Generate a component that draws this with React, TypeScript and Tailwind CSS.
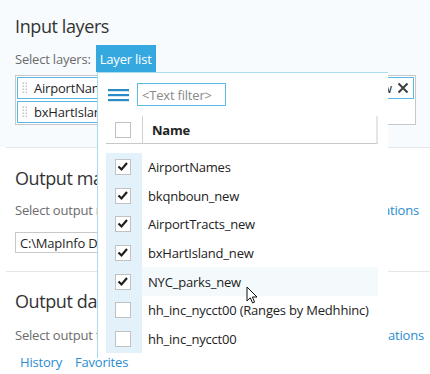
import React from "react";

const layers = [
  { name: "AirportNames", checked: true },
  { name: "bkqnboun_new", checked: true },
  { name: "AirportTracts_new", checked: true },
  { name: "bxHartIsland_new", checked: true },
  { name: "NYC_parks_new", checked: true, hover: true },
  { name: "hh_inc_nycct00 (Ranges by Medhhinc)", checked: false },
  { name: "hh_inc_nycct00", checked: false },
];

function Grip() {
  return (
    <svg width="6" height="12" viewBox="0 0 6 12" className="shrink-0">
      {[1, 4, 7, 10].map((y) => (
        <g key={y} fill="#c4c4c4">
          <rect x="0.5" y={y - 0.5} width="1.5" height="1.5" />
          <rect x="3.5" y={y - 0.5} width="1.5" height="1.5" />
        </g>
      ))}
    </svg>
  );
}

function Checkbox({ checked }: { checked: boolean }) {
  return (
    <div className="w-[16px] h-[16px] border border-[#c2c2c2] bg-white flex items-center justify-center">
      {checked && (
        <svg width="14" height="14" viewBox="0 0 14 14">
          <path d="M2.5 6.5 L5.5 9.5 L11 3" fill="none" stroke="#1e1e1e" strokeWidth="2.2" />
        </svg>
      )}
    </div>
  );
}

function Tag({ children, right }: { children: React.ReactNode; right?: React.ReactNode }) {
  return (
    <div className="h-[22px] border border-[#5ab9e4] bg-white flex items-center pl-[4px] pr-[4px] text-[#1f1f1f]">
      <Grip />
      <span className="ml-[6px] whitespace-nowrap">{children}</span>
      {right}
    </div>
  );
}

export default function App() {
  return (
    <div className="relative w-[430px] h-[374px] overflow-hidden bg-white font-['Open_Sans',sans-serif] text-[13px] leading-[18px] tracking-[-0.2px]">
      {/* Input layers */}
      <section className="bg-[#f7fbfd] px-[15px] pt-[14px] h-[147px]">
        <h2 className="text-[18px] leading-[24px] tracking-[-0.4px] text-[#333]">Input layers</h2>
        <div className="mt-[7px] flex items-center h-[27px]">
          <span className="text-[#6b6b6b]">Select layers:</span>
          <button className="ml-[5px] h-[27px] px-[4px] bg-[#35a8df] text-white">Layer list</button>
        </div>
        <div className="mt-[3px] w-[401px] border border-[#c8c8c8] bg-white p-px flex flex-col gap-[2px]">
          <Tag
            right={
              <>
                <span className="ml-auto whitespace-nowrap">AirportTracts_new</span>
                <svg width="12" height="12" viewBox="0 0 12 12" className="ml-[5px] shrink-0">
                  <path d="M1.5 1.5 L10.5 10.5 M10.5 1.5 L1.5 10.5" stroke="#3d3d3d" strokeWidth="2" />
                </svg>
              </>
            }
          >
            AirportNames
          </Tag>
          <div className="w-[250px]">
            <Tag>bxHartIsland_new, NYC_parks_new</Tag>
          </div>
        </div>
      </section>

      {/* Output map */}
      <section className="ml-[6px] border-t border-[#e6e6e6] pl-[9px] pt-[18px] h-[124px]">
        <h2 className="text-[18px] leading-[24px] tracking-[-0.4px] text-[#333]">Output map</h2>
        <div className="mt-[11px] flex justify-between pr-[11px]">
          <span className="text-[#6b6b6b]">Select output map:</span>
          <span className="text-[#2a8dd0]">Recent locations</span>
        </div>
        <div className="mt-[13px] w-[330px] h-[21px] border border-[#c8c8c8] px-[4px] flex items-center text-[#1f1f1f]">
          C:\MapInfo Data
        </div>
      </section>

      {/* Output data */}
      <section className="ml-[6px] border-t border-[#e6e6e6] pl-[9px] pt-[17px]">
        <h2 className="text-[18px] leading-[24px] tracking-[-0.4px] text-[#333]">Output data</h2>
        <div className="mt-[13px] flex justify-between pr-[6px]">
          <span className="text-[#6b6b6b]">Select output folder:</span>
          <span className="text-[#2a8dd0]">Recent locations</span>
        </div>
        <div className="mt-[9px] flex gap-[13px] pl-[5px] text-[#2a8dd0]">
          <span>History</span>
          <span>Favorites</span>
        </div>
      </section>

      {/* Layer list dropdown */}
      <div className="absolute left-[97px] top-[72px] w-[291px] h-[286px] bg-white border-l border-t border-[#a9dbf0]">
        <div className="mt-[10px] pl-[10px] flex items-center h-[23px]">
          <svg width="21" height="14" viewBox="0 0 21 14">
            <rect x="0" y="1" width="21" height="2.2" fill="#2a8cc3" />
            <rect x="0" y="6" width="21" height="2.2" fill="#2a8cc3" />
            <rect x="0" y="11" width="21" height="2.2" fill="#2a8cc3" />
          </svg>
          <div className="ml-[8px] w-[89px] h-[23px] border border-[#5bbde6] flex items-center pl-[4px] text-[#8a8a8a]">
            &lt;Text filter&gt;
          </div>
        </div>

        <div className="ml-[8px] w-[272px]">
          <div className="mt-[10px] h-[28px] flex border-b border-[#c8c8c8] border-r-2 border-r-[#e6e6e6]">
            <div className="w-[36px] flex items-center pl-[9px]">
              <Checkbox checked={false} />
            </div>
            <div className="w-px bg-[#d2d2d2]" />
            <div className="flex items-center pl-[9px] font-bold text-[#222]">Name</div>
          </div>

          <div className="mt-[9px]">
            {layers.map((l) => (
              <div key={l.name} className="h-[28.6px] flex">
                <div className="w-[36px] bg-[#e3f1fa] flex items-center pl-[9px]">
                  <Checkbox checked={l.checked} />
                </div>
                <div
                  className={`flex-1 flex items-center pl-[6px] text-[#222] whitespace-nowrap ${
                    l.hover ? "bg-[#f4f9fc]" : ""
                  }`}
                >
                  {l.name}
                </div>
              </div>
            ))}
          </div>
        </div>
      </div>

      {/* Mouse pointer */}
      <svg
        width="13"
        height="19"
        viewBox="0 0 13 19"
        className="absolute left-[246px] top-[286px]"
      >
        <path
          d="M1 1 L1 15 L4.3 11.8 L6.6 17 L8.6 16.1 L6.4 11 L11 11 Z"
          fill="#fff"
          stroke="#111"
          strokeWidth="1"
          strokeLinejoin="round"
        />
      </svg>
    </div>
  );
}
